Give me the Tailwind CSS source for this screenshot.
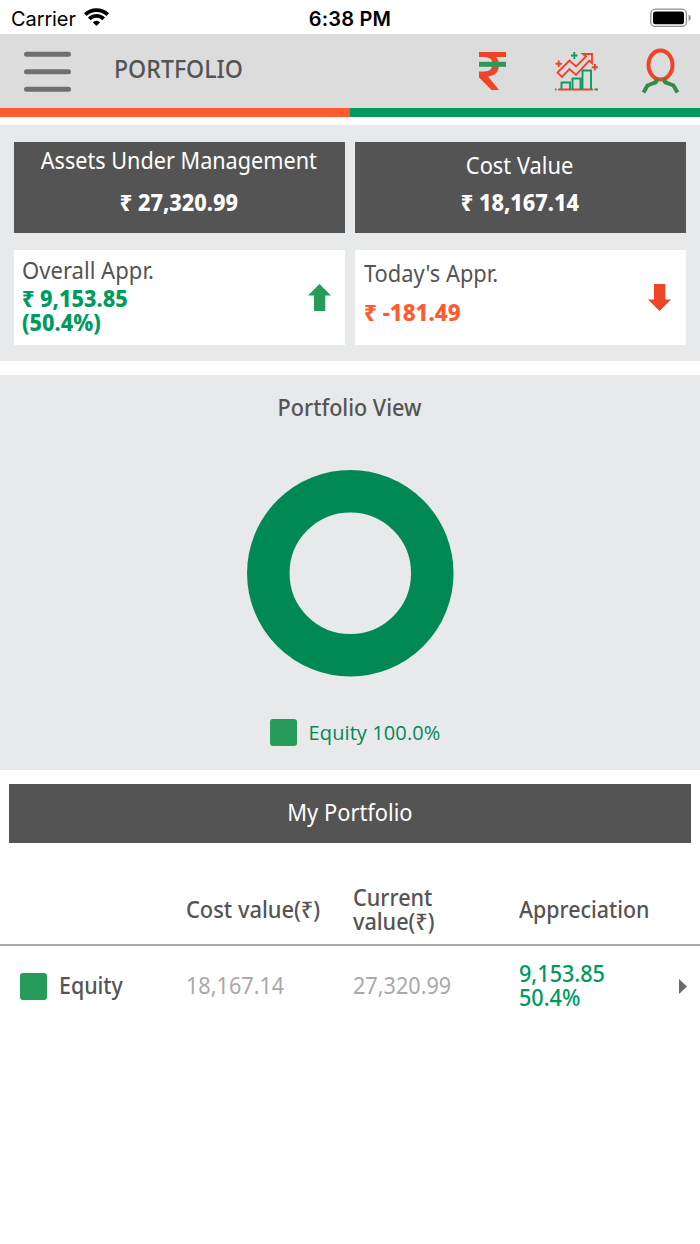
<!DOCTYPE html>
<html lang="en">
  <head>
    <meta charset="UTF-8" />
    <meta name="viewport" content="width=device-width, initial-scale=1.0" />
    <title>Portfolio</title>
    <script src="https://cdn.jsdelivr.net/npm/@tailwindcss/browser@4"></script>
  </head>
  <body class="bg-white font-['Noto_Sans',sans-serif] text-[23px] text-[#545454]">
    <!-- status bar -->
    <div class="h-[34px] pt-[3px] grid grid-cols-3 items-center pl-3 pr-[9px] font-[Inter,sans-serif] text-[20px] text-black">
      <div class="flex items-center gap-2">
        <span class="-ml-px tracking-[-0.1px]">Carrier</span>
        <svg class="-mt-[3px] w-[25px] h-[18px]" viewBox="0 0 25 18" fill="none" stroke="#000" stroke-width="3.8">
          <path d="M1.3 6.6a16 16 0 0 1 22.4 0" />
          <path d="M5.3 10.8a10.2 10.2 0 0 1 14.4 0" />
          <path d="M12.5 18l-3.7-3.8a5.3 5.3 0 0 1 7.4 0z" fill="#000" stroke="none" />
        </svg>
      </div>
      <span class="-ml-[3px] text-center font-semibold tracking-[0.2px]">6:38 PM</span>
      <svg class="-mt-0.5 justify-self-end w-[41px] h-[20px]" viewBox="0 0 41 20">
        <rect x="0.8" y="1.2" width="35.6" height="17.2" rx="4.5" fill="none" stroke="#8e8e8e" stroke-width="1.3" />
        <rect x="3" y="3.6" width="31" height="12.6" rx="2.5" />
        <path d="M38.600 6.500q2.200 1 2.200 3.300t-2.200 3.300z" fill="#8e8e8e" />
      </svg>
    </div>

    <!-- header -->
    <header class="h-[74px] bg-[#dcdcdc] flex items-center pl-6 pr-5">
      <svg class="w-[47px] h-[41px]" viewBox="0 0 47 41" stroke="#707070" stroke-width="5" stroke-linecap="round">
        <path d="M2.500 3.300h42M2.500 20.800h42M2.500 38.300h42" />
      </svg>
      <h1 class="ml-[43px] -mt-[5px] text-[26px] font-medium"><span class="inline-block origin-left scale-x-[.89]">PORTFOLIO</span></h1>
      <div class="ml-auto flex items-center">
        <svg class="w-[27px] h-[38px]" viewBox="0 0 27 38">
          <path d="M0 0H27V5H17Q20 8 20 12Q20 23.500 9 24.500L20 38H12.500L0 25.500V19.500H5Q13.500 19.500 13.500 12Q13.500 5 5 5H0Z" fill="#ee4529" />
          <path d="M0 9.800H27V14.800H0Z" fill="#279b59" />
        </svg>
        <svg class="ml-[49px] mr-px w-[43px] h-[39px]" viewBox="0 0 43 39" fill="none" stroke-width="1.9">
          <g stroke="#ee4529">
            <path d="M28 2H37V11L34.300 8.500L21 23L14.500 17L7 25L2.500 20.500L14.500 8.500L21 14.500L31 4.500Z" />
            <path d="M3.700 8.500V15M.5 11.700H7M39.900 12V18.500M36.700 15.300H43M3 37.500H38" />
          </g>
          <g stroke="#0d9b60">
            <path d="M19.300 0V7M16 3.500H22.500M6.500 37V30.500H15V37M17.500 37V26.500H25.500V37M27.500 37V18.500H36V37M0 37.500H1.500M39.500 37.500H43" />
          </g>
        </svg>
        <svg class="ml-[42px] w-[39px] h-[46px]" viewBox="0 0 39 46" fill="none" stroke-width="4">
          <ellipse cx="19.500" cy="17" rx="12" ry="14.500" stroke="#ee4529" />
          <path d="M15.500 30.500Q16 34.500 13 35L6.500 37.500L2.500 44.500M23.500 30.500Q23 34.500 26 35L32.500 37.500L36.500 44.500" stroke="#338b49" />
        </svg>
      </div>
    </header>
    <div class="h-[9px] grid grid-cols-2">
      <div class="bg-[#ff5b31]"></div>
      <div class="bg-[#009a5e]"></div>
    </div>

    <!-- summary cards -->
    <section class="mt-2 h-[236px] bg-[#e8e9eb] px-3.5 pt-[17px] grid grid-cols-2 grid-rows-[91px_95px] gap-x-2.5 gap-y-[17px] content-start leading-6">
      <div class="bg-[#545454] text-white text-center pt-1.5 pr-0.5">
        <p><span class="inline-block scale-x-[.94]">Assets Under Management</span></p>
        <p class="mt-[18px] font-extrabold"><span class="inline-block scale-x-[.94]">₹ 27,320.99</span></p>
      </div>
      <div class="bg-[#545454] text-white text-center pt-[11px] pr-px">
        <p><span class="inline-block scale-x-95">Cost Value</span></p>
        <p class="mt-[13px] font-extrabold"><span class="inline-block scale-x-[.94]">₹ 18,167.14</span></p>
      </div>
      <div class="bg-white pl-2 pr-3.5 flex items-center justify-between">
        <div class="-mt-1">
          <p class="mb-1"><span class="inline-block origin-left scale-x-[.96]">Overall Appr.</span></p>
          <p class="font-extrabold text-[#009a5e]"><span class="inline-block origin-left scale-x-[.94]">₹ 9,153.85</span></p>
          <p class="font-extrabold text-[#009a5e]"><span class="inline-block origin-left scale-x-[.94]">(50.4%)</span></p>
        </div>
        <svg class="w-[23px] h-[27px]" viewBox="0 0 23 27" fill="#279b59"><path d="M11.500 0L23 11.500H17.300V27H6V11.500H0Z" /></svg>
      </div>
      <div class="bg-white pl-[9px] pr-[15px] flex items-center justify-between">
        <div class="-mt-2.5">
          <p class="mb-[15px]"><span class="inline-block origin-left scale-x-[.95]">Today's Appr.</span></p>
          <p class="font-extrabold text-[#ff5b31]"><span class="inline-block origin-left scale-x-[.97]">₹ -181.49</span></p>
        </div>
        <svg class="w-[23px] h-[27px]" viewBox="0 0 23 27" fill="#ee4529"><path d="M6 0H17.300V15.500H23L11.500 27L0 15.500H6Z" /></svg>
      </div>
    </section>

    <!-- chart -->
    <section class="mt-3.5 h-[395px] bg-[#e8e9eb] flex flex-col items-center">
      <h2 class="mt-5 pr-px leading-6 font-medium"><span class="inline-block scale-x-[.94]">Portfolio View</span></h2>
      <svg class="mt-[50px] w-[208px] h-[208px]" viewBox="0 0 208 208">
        <circle cx="104.300" cy="104.300" r="82" fill="none" stroke="#008955" stroke-width="42.500" />
      </svg>
      <div class="mt-[42px] flex items-center gap-3 pl-[10px] text-[20px] text-[#008955]">
        <div class="size-[27px] rounded-[3px] bg-[#279b59]"></div>
        <span class="leading-[27px] font-['Open_Sans',sans-serif] tracking-[0.1px]">Equity 100.0%</span>
      </div>
    </section>

    <!-- holdings -->
    <section class="mt-3.5">
      <h2 class="mx-[9px] h-[59px] bg-[#545454] text-white text-center pr-px leading-[56px]"><span class="inline-block scale-x-95">My Portfolio</span></h2>
      <div class="mt-[30px] h-[73px] border-b-2 border-[#aaa] grid grid-cols-[166px_167px_166px_1fr] items-center pl-5 leading-6 font-medium">
        <span></span>
        <span><span class="inline-block origin-left scale-x-95">Cost value(₹)</span></span>
        <span><span class="inline-block origin-left scale-x-[.94]">Current<br />value(₹)</span></span>
        <span><span class="inline-block origin-left scale-x-[.93]">Appreciation</span></span>
      </div>
      <div class="h-[80px] grid grid-cols-[166px_167px_166px_1fr] items-center pl-5 pr-[13px] leading-6">
        <div class="flex items-center gap-3 font-medium">
          <div class="size-[27px] rounded-[3px] bg-[#279b59]"></div>
          <span class="-mt-[3px] inline-block origin-left scale-x-[.93]">Equity</span>
        </div>
        <span class="-mt-[3px] text-[#a9a9a9]"><span class="inline-block origin-left scale-x-[.94]">18,167.14</span></span>
        <span class="-mt-[3px] text-[#a9a9a9]"><span class="inline-block origin-left scale-x-[.94]">27,320.99</span></span>
        <div class="flex items-center justify-between font-medium text-[#009a5e]">
          <span class="-mt-[3px] inline-block origin-left scale-x-[.94]">9,153.85<br />50.4%</span>
          <svg class="w-2 h-[15px]" viewBox="0 0 8 15" fill="#6b6b6b"><path d="M0 0L8 7.500L0 15Z" /></svg>
        </div>
      </div>
    </section>
  </body>
</html>
